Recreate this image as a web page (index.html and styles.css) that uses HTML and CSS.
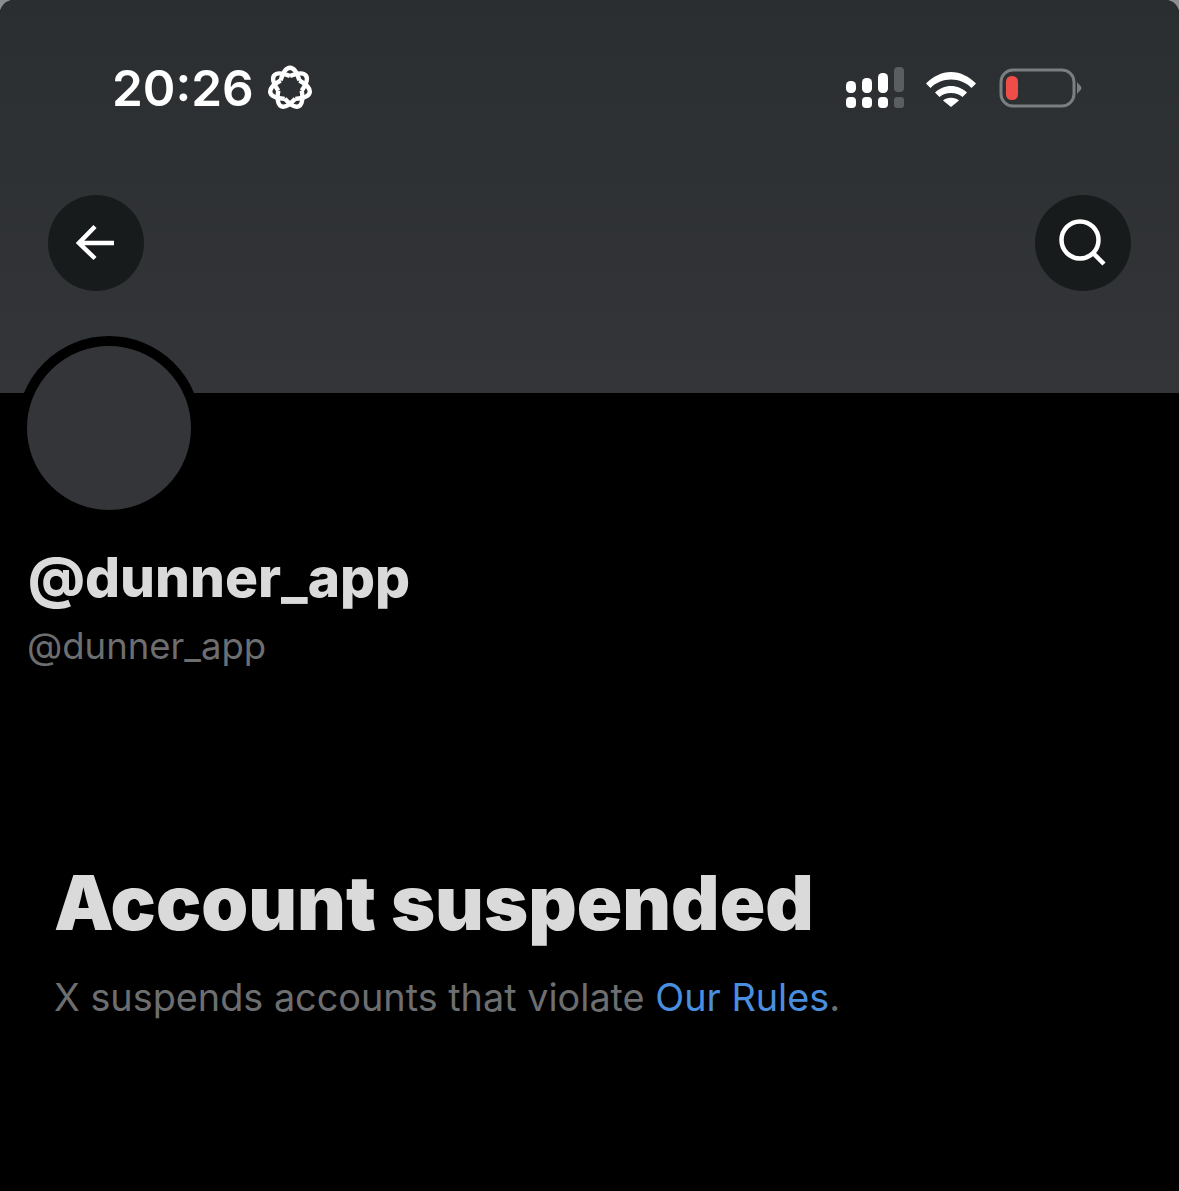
FILE: index.html
```html
<!DOCTYPE html>
<html lang="en">
<head>
  <meta charset="UTF-8">
  <meta name="viewport" content="width=device-width, initial-scale=1.0">
  <title>@dunner_app</title>
  <link rel="stylesheet" href="styles.css">
</head>
<body>
  <div class="screen">
    <header class="banner">
      <div class="status-bar">
        <div class="status-left">
          <span class="time">20:26</span>
          <svg class="ai-icon" width="46" height="46" viewBox="0 0 46 46" fill="none" stroke="#fff" stroke-width="4.400">
            <defs>
              <path id="lobe" d="M13.600 15.500C15.500 9 18.500 2.800 23 2.800C27.500 2.800 30.500 9 32.400 15.500"/>
            </defs>
            <use href="#lobe"/>
            <use href="#lobe" transform="rotate(51.43 23 23)"/>
            <use href="#lobe" transform="rotate(102.86 23 23)"/>
            <use href="#lobe" transform="rotate(154.29 23 23)"/>
            <use href="#lobe" transform="rotate(205.71 23 23)"/>
            <use href="#lobe" transform="rotate(257.14 23 23)"/>
            <use href="#lobe" transform="rotate(308.57 23 23)"/>
          </svg>
        </div>
        <div class="status-right">
          <svg class="signal-icon" width="60" height="42" viewBox="0 0 60 42">
            <rect x="1" y="14" width="10" height="12" rx="4.5" fill="#fff"/>
            <rect x="17" y="11" width="10" height="15" rx="4.5" fill="#fff"/>
            <rect x="33" y="6" width="10" height="20" rx="4.5" fill="#fff"/>
            <rect x="49" y="0" width="10" height="25" rx="4" fill="#5b5e60"/>
            <rect x="1" y="30" width="10" height="11" rx="4" fill="#fff"/>
            <rect x="17" y="30" width="10" height="11" rx="4" fill="#fff"/>
            <rect x="33" y="30" width="10" height="11" rx="4" fill="#fff"/>
            <rect x="49" y="30" width="10" height="11" rx="3" fill="#5b5e60"/>
          </svg>
          <svg class="wifi-icon" width="52" height="38" viewBox="0 0 52 38">
            <path d="M1 14.500C8 7.500 16.500 3 26 3S44 7.500 51 14.500L46.500 19C41 13.500 34 10.500 26 10.500S11 13.500 5.500 19Z" fill="#fff"/>
            <path d="M10 23.500C14.500 19.500 20 17 26 17S37.500 19.500 42 23.500L37.500 28C34.500 25.500 30.500 24 26 24S17.500 25.500 14.500 28Z" fill="#fff"/>
            <path d="M18 31.500C20 29.800 23 28.800 26 28.800S32 29.800 34 31.500L26 38Z" fill="#fff"/>
          </svg>
          <svg class="battery-icon" width="84" height="40" viewBox="0 0 84 40">
            <rect x="2" y="2" width="73" height="36" rx="12" fill="none" stroke="#7b7e80" stroke-width="3"/>
            <rect x="7" y="8" width="12" height="24" rx="5.500" fill="#ee4d48"/>
            <path d="M78 14L82 18.500Q82.800 20 82 21.500L78 26Z" fill="#7b7e80"/>
          </svg>
        </div>
      </div>
      <nav class="nav-row">
        <button class="round-btn" type="button" aria-label="Back">
          <svg width="40" height="40" viewBox="0 0 40 40" fill="none" stroke="#fff" stroke-width="4.500">
            <path d="M38 20H4M19 3.500L3 20L19 35.500"/>
          </svg>
        </button>
        <button class="round-btn" type="button" aria-label="Search">
          <svg width="48" height="48" viewBox="0 0 48 48" fill="none" stroke="#fff" stroke-width="4.500">
            <circle cx="21" cy="21" r="18.500"/>
            <path d="M34 34L45 45"/>
          </svg>
        </button>
      </nav>
    </header>

    <section class="profile">
      <div class="avatar"></div>
      <h1 class="display-name">@dunner_app</h1>
      <div class="handle">@dunner_app</div>
    </section>

    <section class="suspended">
      <h2>Account suspended</h2>
      <p>X suspends accounts that violate <a href="#">Our Rules</a>.</p>
    </section>
  </div>
</body>
</html>
```

FILE: styles.css
```css
/* Reset and global styles */
* {
  margin: 0;
  padding: 0;
  box-sizing: border-box;
}
html {
  background: #8a8c8e;
}
body {
  font-family: 'Inter', 'Liberation Sans', sans-serif;
  width: 1179px;
  height: 1191px;
  overflow: hidden;
}
.screen {
  background: #000;
  height: 100%;
  border-radius: 14px 14px 0 0;
  overflow: hidden;
}
.banner {
  height: 393px;
  background: linear-gradient(180deg, #2b2e30, #333538);
  padding: 60px 48px 0;
}
.status-bar {
  display: flex;
  justify-content: space-between;
  align-items: center;
  height: 56px;
  padding: 0 0 0 64px;
}
.status-left {
  display: flex;
  align-items: center;
  gap: 13px;
}
.time {
  color: #fff;
  font-size: 49.500px;
  font-weight: 600;
  line-height: 56px;
}
.status-right {
  display: flex;
  align-items: center;
  gap: 22px;
  margin-right: 48px;
}
.signal-icon {
  margin-right: -2px;
}
.nav-row {
  display: flex;
  justify-content: space-between;
  margin-top: 79px;
}
.round-btn {
  width: 96px;
  height: 96px;
  border: none;
  border-radius: 50%;
  background: #181b1c;
  display: flex;
  align-items: center;
  justify-content: center;
}
.profile {
  padding-left: 17px;
}
.avatar {
  width: 184px;
  height: 184px;
  margin-top: -57px;
  border: 10px solid #000;
  border-radius: 50%;
  background: #333538;
}
.display-name {
  margin: 25px 0 0 11px;
  color: #dadada;
  font-size: 55px;
  font-weight: 800;
  line-height: 64px;
}
.handle {
  margin: 15px 0 0 10px;
  color: #6d6e70;
  font-size: 36.500px;
  line-height: 44px;
}
.suspended {
  padding: 190px 0 0 54px;
}
.suspended h2 {
  color: #dadada;
  font-size: 75.200px;
  font-weight: 900;
  line-height: 90px;
}
.suspended p {
  margin-top: 27px;
  color: #6d6e70;
  font-size: 37.800px;
  line-height: 44px;
}
.suspended a {
  color: #4a8fdf;
  text-decoration: none;
}
```
